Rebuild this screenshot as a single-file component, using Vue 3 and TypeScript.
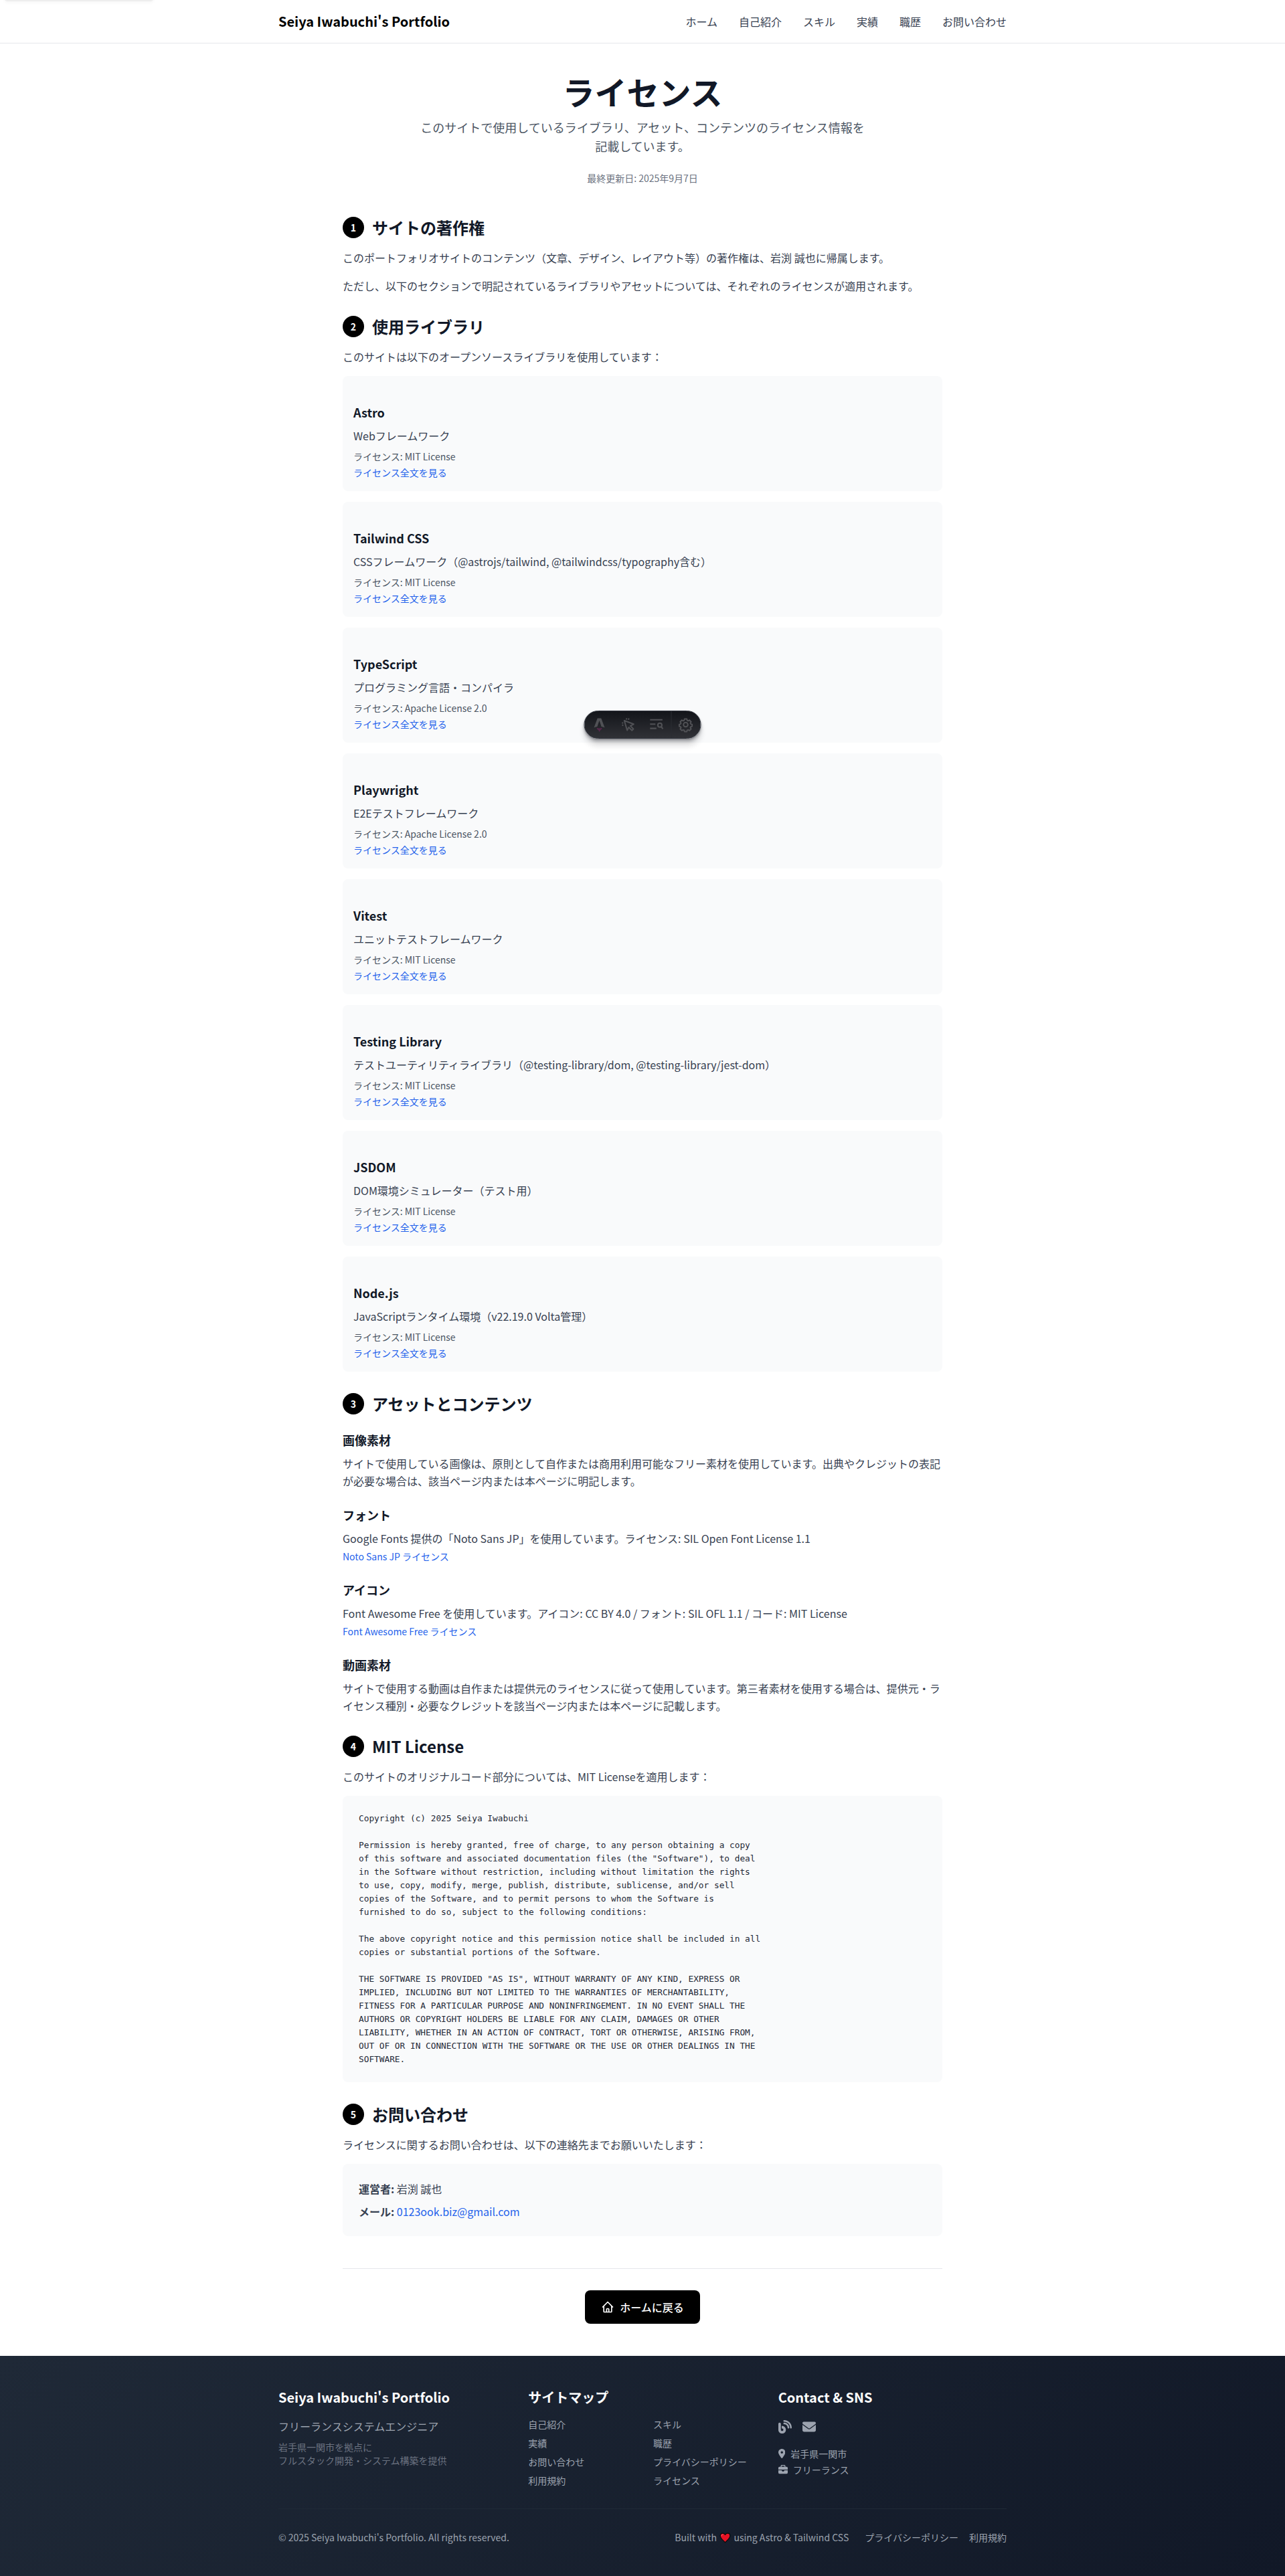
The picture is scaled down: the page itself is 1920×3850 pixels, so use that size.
<script setup lang="ts">
interface NavItem {
  label: string
  href: string
}

interface Library {
  name: string
  description: string
  license: string
}

interface Asset {
  title: string
  body: string
  link?: string
}

const navItems: NavItem[] = [
  { label: 'ホーム', href: '#' },
  { label: '自己紹介', href: '#about' },
  { label: 'スキル', href: '#skills' },
  { label: '実績', href: '#works' },
  { label: '職歴', href: '#career' },
  { label: 'お問い合わせ', href: '#contact' },
]

const libraries: Library[] = [
  { name: 'Astro', description: 'Webフレームワーク', license: 'MIT License' },
  {
    name: 'Tailwind CSS',
    description: 'CSSフレームワーク（@astrojs/tailwind, @tailwindcss/typography含む）',
    license: 'MIT License',
  },
  { name: 'TypeScript', description: 'プログラミング言語・コンパイラ', license: 'Apache License 2.0' },
  { name: 'Playwright', description: 'E2Eテストフレームワーク', license: 'Apache License 2.0' },
  { name: 'Vitest', description: 'ユニットテストフレームワーク', license: 'MIT License' },
  {
    name: 'Testing Library',
    description: 'テストユーティリティライブラリ（@testing-library/dom, @testing-library/jest-dom）',
    license: 'MIT License',
  },
  { name: 'JSDOM', description: 'DOM環境シミュレーター（テスト用）', license: 'MIT License' },
  { name: 'Node.js', description: 'JavaScriptランタイム環境（v22.19.0 Volta管理）', license: 'MIT License' },
]

const assets: Asset[] = [
  {
    title: '画像素材',
    body: 'サイトで使用している画像は、原則として自作または商用利用可能なフリー素材を使用しています。出典やクレジットの表記が必要な場合は、該当ページ内または本ページに明記します。',
  },
  {
    title: 'フォント',
    body: 'Google Fonts 提供の「Noto Sans JP」を使用しています。ライセンス: SIL Open Font License 1.1',
    link: 'Noto Sans JP ライセンス',
  },
  {
    title: 'アイコン',
    body: 'Font Awesome Free を使用しています。アイコン: CC BY 4.0 / フォント: SIL OFL 1.1 / コード: MIT License',
    link: 'Font Awesome Free ライセンス',
  },
  {
    title: '動画素材',
    body: 'サイトで使用する動画は自作または提供元のライセンスに従って使用しています。第三者素材を使用する場合は、提供元・ライセンス種別・必要なクレジットを該当ページ内または本ページに記載します。',
  },
]

const mitLicense = `Copyright (c) 2025 Seiya Iwabuchi

Permission is hereby granted, free of charge, to any person obtaining a copy
of this software and associated documentation files (the "Software"), to deal
in the Software without restriction, including without limitation the rights
to use, copy, modify, merge, publish, distribute, sublicense, and/or sell
copies of the Software, and to permit persons to whom the Software is
furnished to do so, subject to the following conditions:

The above copyright notice and this permission notice shall be included in all
copies or substantial portions of the Software.

THE SOFTWARE IS PROVIDED "AS IS", WITHOUT WARRANTY OF ANY KIND, EXPRESS OR
IMPLIED, INCLUDING BUT NOT LIMITED TO THE WARRANTIES OF MERCHANTABILITY,
FITNESS FOR A PARTICULAR PURPOSE AND NONINFRINGEMENT. IN NO EVENT SHALL THE
AUTHORS OR COPYRIGHT HOLDERS BE LIABLE FOR ANY CLAIM, DAMAGES OR OTHER
LIABILITY, WHETHER IN AN ACTION OF CONTRACT, TORT OR OTHERWISE, ARISING FROM,
OUT OF OR IN CONNECTION WITH THE SOFTWARE OR THE USE OR OTHER DEALINGS IN THE
SOFTWARE.`

const sitemap: string[] = [
  '自己紹介',
  'スキル',
  '実績',
  '職歴',
  'お問い合わせ',
  'プライバシーポリシー',
  '利用規約',
  'ライセンス',
]
</script>

<template>
  <div class="page" lang="ja">
    <div class="skip-link"></div>

    <header class="site-header">
      <div class="container header-row">
        <a class="brand" href="#">Seiya Iwabuchi's Portfolio</a>
        <nav class="nav">
          <a v-for="item in navItems" :key="item.label" :href="item.href">{{ item.label }}</a>
        </nav>
      </div>
    </header>

    <main class="main">
      <div class="intro">
        <h1>ライセンス</h1>
        <p class="lead">このサイトで使用しているライブラリ、アセット、コンテンツのライセンス情報を記載しています。</p>
        <p class="updated">最終更新日: 2025年9月7日</p>
      </div>

      <section>
        <h2><span class="num">1</span>サイトの著作権</h2>
        <p>このポートフォリオサイトのコンテンツ（文章、デザイン、レイアウト等）の著作権は、岩渕 誠也に帰属します。</p>
        <p>ただし、以下のセクションで明記されているライブラリやアセットについては、それぞれのライセンスが適用されます。</p>
      </section>

      <section>
        <h2><span class="num">2</span>使用ライブラリ</h2>
        <p>このサイトは以下のオープンソースライブラリを使用しています：</p>
        <div class="libraries">
          <article v-for="lib in libraries" :key="lib.name" class="card">
            <h3>{{ lib.name }}</h3>
            <p>{{ lib.description }}</p>
            <p class="license">ライセンス: {{ lib.license }}</p>
            <div class="link-line"><a class="link" href="#">ライセンス全文を見る</a></div>
          </article>
        </div>
      </section>

      <section>
        <h2><span class="num">3</span>アセットとコンテンツ</h2>
        <div v-for="asset in assets" :key="asset.title" class="asset">
          <h3>{{ asset.title }}</h3>
          <p>{{ asset.body }}</p>
          <div v-if="asset.link" class="link-line"><a class="link" href="#">{{ asset.link }}</a></div>
        </div>
      </section>

      <section>
        <h2><span class="num">4</span>MIT License</h2>
        <p>このサイトのオリジナルコード部分については、MIT Licenseを適用します：</p>
        <pre class="license-text">{{ mitLicense }}</pre>
      </section>

      <section>
        <h2><span class="num">5</span>お問い合わせ</h2>
        <p>ライセンスに関するお問い合わせは、以下の連絡先までお願いいたします：</p>
        <div class="contact-box">
          <p><strong>運営者:</strong> 岩渕 誠也</p>
          <p><strong>メール:</strong> <a class="mail" href="#">0123ook.biz@gmail.com</a></p>
        </div>
      </section>

      <div class="back">
        <a class="button" href="#">
          <svg width="20" height="20" viewBox="0 0 24 24" fill="none" stroke="currentColor" stroke-width="2" stroke-linecap="round" stroke-linejoin="round">
            <path d="M3 12l2-2m0 0l7-7 7 7M5 10v10a1 1 0 001 1h3m10-11l2 2m-2-2v10a1 1 0 01-1 1h-3m-6 0a1 1 0 001-1v-4a1 1 0 011-1h2a1 1 0 011 1v4a1 1 0 001 1m-6 0h6" />
          </svg>
          <span>ホームに戻る</span>
        </a>
      </div>
    </main>

    <footer class="footer">
      <div class="container">
        <div class="footer-grid">
          <div>
            <h3>Seiya Iwabuchi's Portfolio</h3>
            <p class="role">フリーランスシステムエンジニア</p>
            <p class="tagline">岩手県一関市を拠点に<br />フルスタック開発・システム構築を提供</p>
          </div>
          <div>
            <h3>サイトマップ</h3>
            <div class="sitemap">
              <a v-for="item in sitemap" :key="item" href="#">{{ item }}</a>
            </div>
          </div>
          <div>
            <h3>Contact &amp; SNS</h3>
            <div class="social">
              <svg width="20" height="20" viewBox="0 0 512 512" fill="currentColor">
                <path d="M192 32c0 17.7 14.3 32 32 32c123.7 0 224 100.3 224 224c0 17.7 14.3 32 32 32s32-14.3 32-32C512 128.9 383.1 0 224 0c-17.7 0-32 14.3-32 32zm0 96c0 17.7 14.3 32 32 32c70.7 0 128 57.3 128 128c0 17.7 14.3 32 32 32s32-14.3 32-32c0-106-86-192-192-192c-17.7 0-32 14.3-32 32zM96 144c0-26.5-21.5-48-48-48S0 117.5 0 144V368c0 79.5 64.5 144 144 144s144-64.5 144-144s-64.5-144-144-144H128v96h16c26.5 0 48 21.5 48 48s-21.5 48-48 48s-48-21.5-48-48V144z" />
              </svg>
              <svg width="20" height="20" viewBox="0 0 512 512" fill="currentColor">
                <path d="M48 64C21.5 64 0 85.5 0 112c0 15.1 7.1 29.3 19.2 38.4L236.8 313.6c11.4 8.5 27 8.5 38.4 0L492.8 150.4c12.1-9.1 19.2-23.3 19.2-38.4c0-26.5-21.5-48-48-48H48zM0 176V384c0 35.3 28.7 64 64 64H448c35.3 0 64-28.7 64-64V176L294.4 339.2c-22.8 17.1-54 17.1-76.8 0L0 176z" />
              </svg>
            </div>
            <div class="facts">
              <p>
                <svg width="10.5" height="14" viewBox="0 0 384 512" fill="currentColor">
                  <path d="M215.7 499.2C267 435 384 279.4 384 192C384 86 298 0 192 0S0 86 0 192c0 87.4 117 243 168.3 307.2c12.3 15.3 35.1 15.3 47.4 0zM192 128a64 64 0 1 1 0 128 64 64 0 1 1 0-128z" />
                </svg>
                <span>岩手県一関市</span>
              </p>
              <p>
                <svg width="14" height="14" viewBox="0 0 512 512" fill="currentColor">
                  <path d="M184 48H328c4.4 0 8 3.6 8 8V96H176V56c0-4.4 3.6-8 8-8zm-56 8V96H64C28.7 96 0 124.7 0 160v96H192 320 512V160c0-35.3-28.7-64-64-64H384V56c0-30.9-25.1-56-56-56H184c-30.9 0-56 25.1-56 56zM512 288H320v32c0 17.7-14.3 32-32 32H224c-17.7 0-32-14.3-32-32V288H0V416c0 35.3 28.7 64 64 64H448c35.3 0 64-28.7 64-64V288z" />
                </svg>
                <span>フリーランス</span>
              </p>
            </div>
          </div>
        </div>

        <div class="footer-bottom">
          <p>© 2025 Seiya Iwabuchi's Portfolio. All rights reserved.</p>
          <div class="footer-right">
            <p>
              Built with
              <svg class="heart" width="19" height="16" viewBox="0 0 19 16">
                <path d="M9.5 14.8C7.4 12.2 2.2 8.8 2.2 4.9 2.2 2.5 3.9 1.2 5.9 1.2c1.600 0 2.900.9 3.600 2.200.7-1.300 2-2.200 3.600-2.200 2 0 3.700 1.300 3.700 3.700 0 3.900-5.200 7.300-7.300 9.900z" fill="#e81224" stroke="#0b0b0b" stroke-width="1.200" stroke-linejoin="round" />
                <path d="M4.200 4.700c.1-.9.700-1.500 1.500-1.600" fill="none" stroke="#f4737d" stroke-width="1" stroke-linecap="round" />
              </svg>
              using Astro &amp; Tailwind CSS
            </p>
            <div class="legal">
              <a href="#">プライバシーポリシー</a>
              <a href="#">利用規約</a>
            </div>
          </div>
        </div>
      </div>
    </footer>

    <!-- Floating developer toolbar -->
    <div class="toolbar">
      <div class="tool">
        <svg width="24" height="24" viewBox="0 0 24 24">
          <path d="M9.200 2.400h5.600l5.200 14.200c-1.700-.8-3.300-1.300-4.900-1.500L12 6.100 8.900 15.100c-1.600.2-3.200.7-4.900 1.500z" fill="#505155" />
          <path d="M8.100 16.800c2.300.9 5.500.9 7.800 0 .2 2-1.500 2.900-2.400 3.600-.6.600-1 1.300-1.400 2.600-.8-1-1-1.800-1.200-2.700-.9 0-2.700-1.500-2.800-3.500z" fill="#56274b" />
        </svg>
      </div>
      <div class="tool">
        <svg width="24" height="24" viewBox="0 0 24 24" fill="none" stroke="#505155" stroke-width="2" stroke-linejoin="round">
          <path d="M6.300 6l14 5.300-4.900 2.600 4.500 4.600-2.200 2.200-4.700-4.700-2.400 4.500z" />
          <path d="M9.600 2.600v2M13.200 2.600l-.8 2M2.800 9.400h2M3 13.400l1.800-.9" />
        </svg>
      </div>
      <div class="tool">
        <svg width="24" height="24" viewBox="0 0 24 24" fill="none" stroke="#505155" stroke-width="2.100">
          <path d="M2.800 4.800h18.500M2.800 11.200h8M2.800 17.600h9.500" />
          <circle cx="17.400" cy="12.800" r="3" />
          <path d="M19.300 15.100l2.700 3.200" />
        </svg>
      </div>
      <div class="tool settings">
        <svg width="24" height="24" viewBox="0 0 24 24" fill="none" stroke="#505155" stroke-width="2" stroke-linejoin="round">
          <circle cx="12" cy="12" r="3.300" />
          <path d="M10.300 3.600h3.400l.6 2.200 1.400.6 2-1.100 2.400 2.400-1.100 2 .6 1.400 2 .5v3l-2 .6-.6 1.300 1.100 2-2.400 2.400-2-1.100-1.400.6-.6 2h-3.400l-.6-2-1.400-.6-2 1.100-2.400-2.400 1.100-2-.6-1.300-2-.6v-3l2-.5.6-1.400-1.100-2 2.400-2.400 2 1.100 1.400-.6z" />
        </svg>
      </div>
    </div>
  </div>
</template>

<style>
body {
  margin: 0;
  background: #fff;
}
</style>

<style scoped>
.page {
  position: relative;
  font-family: 'Noto Sans CJK JP', 'Noto Sans', sans-serif;
  font-size: 16px;
  line-height: 26px;
  color: #374151;
  background: #fff;
  overflow: hidden;
}

h1,
h2,
h3,
p,
pre {
  margin: 0;
}

a {
  color: inherit;
  text-decoration: none;
}

.container {
  box-sizing: border-box;
  max-width: 1152px;
  margin: 0 auto;
  padding: 0 32px;
}

.skip-link {
  position: absolute;
  top: -38px;
  left: 7px;
  width: 222px;
  height: 40px;
  border-radius: 4px;
  background: #eeeeee;
  box-shadow: 0 2px 5px rgba(0, 0, 0, 0.04);
}

.site-header {
  border-bottom: 1px solid #e5e7eb;
}

.header-row {
  display: flex;
  align-items: center;
  justify-content: space-between;
  height: 64px;
}

.brand {
  font-size: 20px;
  line-height: 28px;
  font-weight: 700;
  color: #000;
}

.nav {
  display: flex;
  gap: 32px;
  line-height: 24px;
}

.main {
  max-width: 896px;
  margin: 0 auto;
  padding: 47px 0 48px;
}

.intro {
  display: flex;
  flex-direction: column;
  align-items: center;
  text-align: center;
  margin-bottom: 48px;
}

.intro h1 {
  font-size: 48px;
  line-height: 48px;
  color: #111827;
  margin-bottom: 16px;
}

.lead {
  max-width: 672px;
  font-size: 18px;
  line-height: 28px;
  color: #4b5563;
}

.updated {
  margin-top: 24px;
  font-size: 14px;
  line-height: 20px;
  color: #6b7280;
}

section {
  display: flex;
  flex-direction: column;
  gap: 16px;
  margin-bottom: 32px;
}

h2 {
  display: flex;
  align-items: center;
  gap: 12px;
  font-size: 24px;
  line-height: 32px;
  color: #111827;
}

.num {
  display: flex;
  align-items: center;
  justify-content: center;
  width: 32px;
  height: 32px;
  border-radius: 50%;
  background: #000;
  color: #fff;
  font-size: 14px;
  line-height: 20px;
}

h3 {
  font-size: 18px;
  line-height: 28px;
  color: #111827;
  margin-bottom: 8px;
}

.libraries {
  display: flex;
  flex-direction: column;
  gap: 16px;
}

.card {
  padding: 40px 16px 16px;
  border-radius: 8px;
  background: #f9fafb;
}

.license {
  margin-top: 8px;
  font-size: 14px;
  line-height: 20px;
  color: #4b5563;
}

.link-line {
  height: 26px;
}

.link {
  font-size: 14px;
  line-height: 20px;
  color: #2563eb;
}

.asset {
  margin-top: 8px;
}

.license-text {
  padding: 24px;
  border-radius: 8px;
  background: #f9fafb;
  color: #1f2937;
  font-family: 'DejaVu Sans Mono', 'Liberation Mono', monospace;
  font-size: 12.79px;
  line-height: 20px;
}

.contact-box {
  display: flex;
  flex-direction: column;
  gap: 8px;
  padding: 24px;
  border-radius: 8px;
  background: #f9fafb;
}

.mail {
  color: #2563eb;
}

.back {
  display: flex;
  justify-content: center;
  margin-top: 48px;
  padding-top: 32px;
  border-top: 1px solid #e5e7eb;
}

.button {
  display: flex;
  align-items: center;
  gap: 8px;
  padding: 12px 24px;
  border-radius: 8px;
  background: #000;
  color: #fff;
  font-weight: 500;
}

.footer {
  padding: 48px 0;
  background: linear-gradient(135deg, #1f2937 0%, #111827 100%);
  color: #9ca3af;
}

.footer-grid {
  display: grid;
  grid-template-columns: repeat(3, 1fr);
  gap: 32px;
  padding-bottom: 32px;
}

.footer h3 {
  font-size: 20px;
  line-height: 28px;
  margin-bottom: 16px;
  color: #fff;
}

.tagline {
  margin-top: 8px;
  font-size: 14px;
  line-height: 20px;
  color: #6b7280;
}

.sitemap {
  display: grid;
  grid-template-columns: repeat(2, 1fr);
  gap: 8px 32px;
  font-size: 14px;
  line-height: 20px;
  white-space: nowrap;
}

.social {
  display: flex;
  align-items: center;
  gap: 16px;
  height: 28px;
  margin-bottom: 16px;
}

.facts {
  display: flex;
  flex-direction: column;
  gap: 4px;
  font-size: 14px;
  line-height: 20px;
}

.facts p {
  display: flex;
  align-items: center;
  gap: 8px;
}

.footer-bottom {
  display: flex;
  justify-content: space-between;
  padding-top: 32px;
  border-top: 1px solid #1f2937;
  font-size: 14px;
  line-height: 20px;
}

.footer-right {
  display: flex;
  gap: 24px;
}

.legal {
  display: flex;
  gap: 16px;
}

.heart {
  vertical-align: -3px;
}

.toolbar {
  position: absolute;
  top: 1062px;
  left: 50%;
  transform: translateX(-50%);
  display: flex;
  box-sizing: border-box;
  width: 175px;
  height: 42px;
  padding: 0 1px;
  border: 1px solid #343841;
  border-radius: 21px;
  background: linear-gradient(180deg, #13151a 0%, #303136 100%);
  box-shadow:
    0 1px 2px rgba(19, 21, 26, 0.3),
    0 4px 4px rgba(19, 21, 26, 0.26),
    0 10px 8px rgba(19, 21, 26, 0.15);
}

.tool {
  display: flex;
  flex: 1 1 0;
  align-items: center;
  justify-content: center;
}

.settings {
  border-left: 1px solid #2b2c33;
}
</style>
